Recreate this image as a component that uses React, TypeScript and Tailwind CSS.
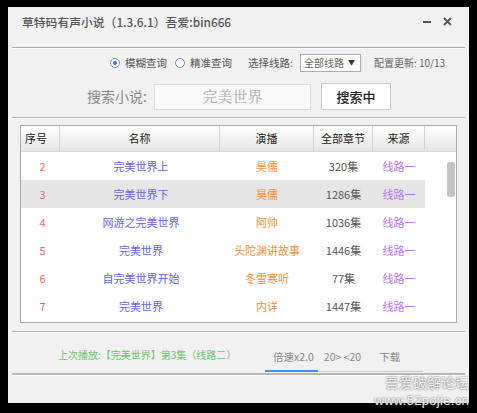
import React from "react";

const font = { fontFamily: '"Noto Sans CJK SC", "Noto Sans", sans-serif' };

const rows = [
  { no: "2", name: "完美世界上", anchor: "昊儒", count: "320集", src: "线路一" },
  { no: "3", name: "完美世界下", anchor: "昊儒", count: "1286集", src: "线路一", active: true },
  { no: "4", name: "网游之完美世界", anchor: "阿帅", count: "1036集", src: "线路一" },
  { no: "5", name: "完美世界", anchor: "头陀渊讲故事", count: "1446集", src: "线路一" },
  { no: "6", name: "自完美世界开始", anchor: "冬雪寒听", count: "77集", src: "线路一" },
  { no: "7", name: "完美世界", anchor: "内详", count: "1447集", src: "线路一" },
];

function Radio({ checked, label }: { checked?: boolean; label: string }) {
  return (
    <div className="flex items-center gap-[5px]">
      <span className="flex h-[10px] w-[10px] items-center justify-center rounded-full border border-[#7d8fa8] bg-white">
        {checked ? <span className="h-[4px] w-[4px] rounded-full bg-[#2f7ad8]" /> : null}
      </span>
      <span className="text-[10.5px] text-[#555]">{label}</span>
    </div>
  );
}

export default function App() {
  return (
    <div className="relative h-[413px] w-[477px] overflow-hidden bg-black pl-[8px] pt-[7px]" style={font}>
      <div className="flex h-[396px] w-[461px] flex-col bg-[#f1f1f1]">
        {/* title bar */}
        <div className="flex h-[40px] items-start justify-between pl-[14px] pr-[17px] pt-[6px]">
          <span className="text-[11.8px] font-medium leading-[18px] text-[#555]">草特码有声小说（1.3.6.1）吾爱:bin666</span>
          <div className="flex items-center gap-[12px] pt-[4px]">
            <span className="h-[2px] w-[8px] bg-[#555]" />
            <svg width="9" height="9" viewBox="0 0 9 9">
              <path d="M1 1 L8 8 M8 1 L1 8" stroke="#555" strokeWidth="1.8" />
            </svg>
          </div>
        </div>
        <div className="mx-[4px] h-[2px] border-t border-[#a9a9a9] border-b border-b-white" />

        {/* options */}
        <div className="flex h-[27px] items-center pl-[102px]">
          <Radio checked label="模糊查询" />
          <div className="ml-[8px]">
            <Radio label="精准查询" />
          </div>
          <span className="ml-[16px] text-[10.5px] text-[#555]">选择线路:</span>
          <div className="ml-[7px] flex h-[18px] w-[61px] items-center justify-between border border-[#aab] bg-white pl-[3px] pr-[5px]">
            <span className="text-[10px] text-[#666]">全部线路</span>
            <span className="text-[7px] text-[#333]">▼</span>
          </div>
          <span className="ml-[13px] text-[10px] text-[#666]">配置更新: 10/13</span>
        </div>

        {/* search */}
        <div className="flex h-[41px] items-center pl-[79px]">
          <span className="text-[14px] text-[#888]">搜索小说:</span>
          <div className="ml-[7px] flex h-[26px] w-[157px] items-center justify-center border border-[#ddd] bg-[#f9f9f9]">
            <span className="text-[15px] text-[#aaa]" style={{ fontFamily: '"Noto Serif CJK SC", "Noto Sans CJK SC", serif' }}>
              完美世界
            </span>
          </div>
          <div className="ml-[10px] flex h-[27px] w-[70px] items-center justify-center border border-[#ccc] bg-white">
            <span className="text-[13px] font-medium text-[#222]">搜索中</span>
          </div>
        </div>
        <div className="mx-[4px] h-[2px] border-t border-[#b4b4b4] border-b border-b-white" />

        {/* table */}
        <div className="mx-[12px] mt-[6px] flex h-[198px] flex-col border border-[#aaa] bg-white">
          <div className="flex h-[26px] border-b border-[#ddd] bg-gradient-to-b from-white to-[#e6e6e6] text-[11px] text-[#222]">
            <div className="flex w-[39px] items-center border-r border-[#d4d4d4] pl-[4px]">序号</div>
            <div className="flex w-[160px] items-center justify-center border-r border-[#d4d4d4]">名称</div>
            <div className="flex w-[94px] items-center justify-center border-r border-[#d4d4d4]">演播</div>
            <div className="flex w-[59px] items-center justify-center border-r border-[#d4d4d4]">全部章节</div>
            <div className="flex w-[52px] items-center justify-center border-r border-[#d4d4d4]">来源</div>
            <div className="flex-1" />
          </div>
          <div className="flex flex-1">
            <div className="flex w-[404px] flex-col">
              {rows.map((r) => (
                <div key={r.no} className={`flex h-[28px] items-center text-[11px] ${r.active ? "bg-[#e6e6e6]" : ""}`}>
                  <div className="w-[39px] pl-[4px] text-center text-[#f06a6a]">{r.no}</div>
                  <div className="w-[160px] pl-[2px] text-center text-[#6464f0]">{r.name}</div>
                  <div className="w-[94px] text-center text-[#f39038]">{r.anchor}</div>
                  <div className="w-[59px] text-center text-[#555]">{r.count}</div>
                  <div className="w-[52px] text-center text-[#bd74f4]">{r.src}</div>
                </div>
              ))}
            </div>
            <div className="flex flex-1 justify-end pr-[1px] pt-[10px]">
              <div className="h-[35px] w-[8px] rounded-[3px] bg-[#c4c4c4]" />
            </div>
          </div>
        </div>
        <div className="mx-[4px] mt-[8px] h-[2px] border-t border-[#b4b4b4] border-b border-b-white" />

        {/* footer */}
        <div className="flex h-[39px] items-end">
          <div className="mb-[8px] ml-[50px] w-[207px]">
            <span className="text-[10px] text-[#6cc46c]">上次播放:【完美世界】第3集（线路二）</span>
          </div>
          <div className="flex w-[158px] flex-col">
            <div className="flex items-center pb-[5px] text-[10.5px] text-[#888]">
              <span className="ml-[8px]">倍速x2.0</span>
              <span className="ml-[10px]">20&gt; &lt;20</span>
              <span className="ml-[18px]">下载</span>
            </div>
            <div className="flex h-[2px]">
              <div className="w-[53px] bg-[#4a90e2]" />
              <div className="mt-[1px] h-[1px] flex-1 bg-[#c8c8c8]" />
            </div>
          </div>
        </div>
        <div className="mx-[4px] mt-[1px] h-[3px] border-t-2 border-[#b8b8b8] border-b border-b-white" />
      </div>

      {/* watermark */}
      <div className="absolute left-[380px] top-[374px] flex w-[89px] flex-col items-end text-white/90 [text-shadow:0_0_2px_#444]">
        <span className="text-[14px] leading-[17px]">吾爱破解论坛</span>
        <span className="mt-[2px] text-[13px] leading-[16px] tracking-[0.3px]" style={{ fontFamily: '"Liberation Sans", sans-serif' }}>www.52pojie.cn</span>
      </div>
    </div>
  );
}
